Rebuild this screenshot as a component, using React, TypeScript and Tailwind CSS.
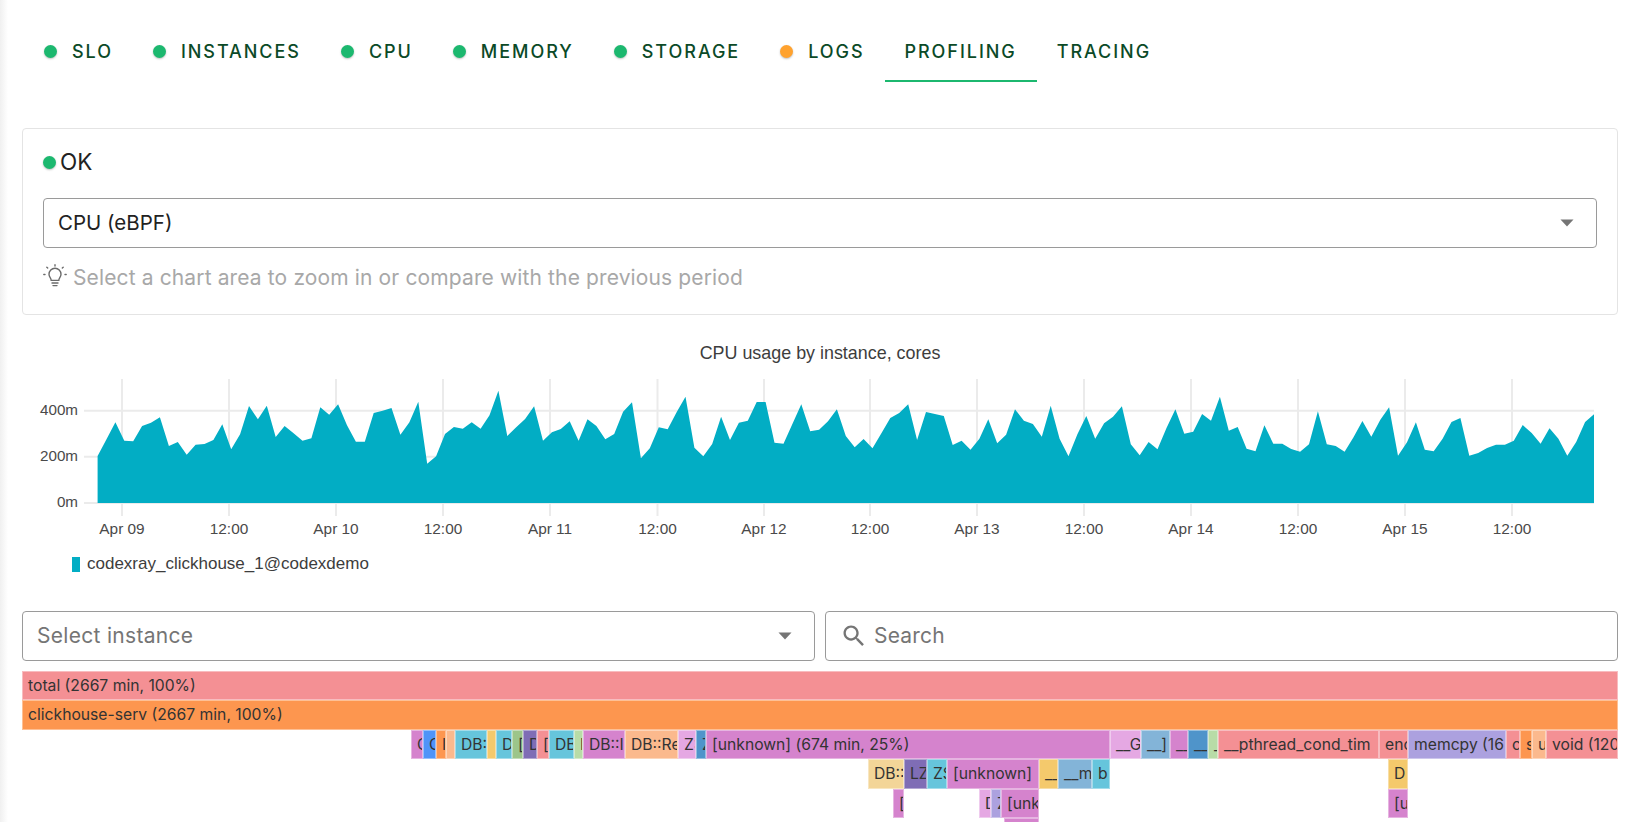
const font = "font-['Inter','Noto_Sans',sans-serif]"

const tabs = [
  { name: "SLO", dot: "bg-[#1cb86f]" },
  { name: "INSTANCES", dot: "bg-[#1cb86f]" },
  { name: "CPU", dot: "bg-[#1cb86f]" },
  { name: "MEMORY", dot: "bg-[#1cb86f]" },
  { name: "STORAGE", dot: "bg-[#1cb86f]" },
  { name: "LOGS", dot: "bg-[#ffa22e]" },
  { name: "PROFILING", active: true },
  { name: "TRACING" },
]

// y of each hourly sample, measured from the top of the plot (340px on the page), x3
const samples = [
  348, 298, 247, 302, 304, 258, 248, 232, 318, 306, 344, 314, 312, 300, 253, 328, 283, 198, 238, 197, 291, 258, 280, 302,
  295, 202, 224, 193, 256, 305, 305, 219, 212, 204, 284, 247, 185, 371, 349, 282, 261, 266, 247, 266, 226, 152, 288, 262,
  237, 199, 302, 277, 267, 244, 302, 238, 258, 298, 282, 215, 187, 355, 325, 262, 268, 217, 170, 323, 349, 312, 230, 300,
  248, 242, 186, 186, 308, 311, 252, 193, 274, 269, 244, 208, 288, 322, 297, 325, 280, 234, 219, 193, 300, 216, 222, 228,
  315, 302, 329, 296, 238, 310, 284, 208, 242, 252, 290, 197, 296, 349, 283, 228, 296, 250, 230, 199, 313, 346, 306, 328,
  264, 208, 281, 275, 222, 242, 170, 272, 261, 326, 334, 256, 311, 311, 327, 335, 313, 214, 313, 318, 335, 292, 243, 290,
  240, 202, 347, 307, 247, 329, 334, 296, 246, 234, 347, 339, 324, 314, 314, 302, 255, 279, 311, 265, 296, 347, 306, 246,
  223,
]

const plotLeft = 97.6
const plotRight = 1594
const step = (plotRight - plotLeft) / (samples.length - 1)
const base = 503
const areaPoints = [
  `${plotLeft},${base}`,
  ...samples.map((v, i) => `${(plotLeft + i * step).toFixed(1)},${(340 + v / 3).toFixed(1)}`),
  `${plotRight},${base}`,
].join(" ")

const xTicks = [
  ["Apr 09", 122], ["12:00", 229], ["Apr 10", 336], ["12:00", 443], ["Apr 11", 550], ["12:00", 657.5],
  ["Apr 12", 764], ["12:00", 870], ["Apr 13", 977], ["12:00", 1084], ["Apr 14", 1191], ["12:00", 1298],
  ["Apr 15", 1405], ["12:00", 1512],
] as const

const yTicks = [["400m", 410.7], ["200m", 456.7], ["0m", 503]] as const

const pink = "bg-[#d583cd]"
const lightPink = "bg-[#e5a8e3]"
const salmon = "bg-[#f49094]"
const orange = "bg-[#fd964f]"
const peach = "bg-[#fbb98d]"
const cyan = "bg-[#66c5dc]"
const blue = "bg-[#4f94f8]"
const steel = "bg-[#4f94ca]"
const bluegray = "bg-[#83b4d8]"
const yellow = "bg-[#f4c96c]"
const tan = "bg-[#f3d598]"
const green = "bg-[#9cc58a]"
const lightGreen = "bg-[#b8dca7]"
const purple = "bg-[#7f6db5]"
const lavender = "bg-[#aca1df]"

type Frame = [number, number, string, string]

const flame: Frame[][] = [
  [[22, 1618, salmon, "total (2667 min, 100%)"]],
  [[22, 1618, orange, "clickhouse-serv (2667 min, 100%)"]],
  [
    [411, 423, pink, "C"], [423, 436, blue, "C"], [436, 446, orange, "I"], [446, 455, peach, ""],
    [455, 487, cyan, "DB:"], [487, 496, yellow, ""], [496, 512, cyan, "D"], [512, 523, green, "["],
    [523, 537, purple, "D"], [537, 549, salmon, "["], [549, 574, cyan, "DB"], [574, 583, lightGreen, "I"],
    [583, 625, pink, "DB::I"], [625, 678, peach, "DB::Re"], [678, 696, lightPink, "Z:"], [696, 706, steel, "Z"],
    [706, 1110, pink, "[unknown] (674 min, 25%)"], [1110, 1141, lightPink, "__G"], [1141, 1170, bluegray, "__]"],
    [1170, 1188, pink, "__"], [1188, 1208, steel, "__"], [1208, 1218, lightGreen, "_"],
    [1218, 1379, salmon, "__pthread_cond_tim"], [1379, 1408, salmon, "enc"], [1408, 1506, lavender, "memcpy (16"],
    [1506, 1520, salmon, "c"], [1520, 1532, orange, "s"], [1532, 1546, peach, "u"], [1546, 1618, salmon, "void (120"],
  ],
  [
    [868, 904, tan, "DB::"], [904, 927, purple, "LZ"], [927, 947, cyan, "ZS"], [947, 1039, pink, "[unknown]"],
    [1039, 1058, yellow, "__"], [1058, 1092, bluegray, "__m"], [1092, 1110, cyan, "b"], [1388, 1408, yellow, "D"],
  ],
  [
    [893, 904, pink, "["], [979, 991, lightPink, "D"], [991, 1001, lavender, "Z"], [1001, 1039, pink, "[unk"],
    [1388, 1408, pink, "[u"],
  ],
  [[1004, 1039, pink, ""]],
]

function Caret() {
  return (
    <svg width="14" height="8" viewBox="0 0 14 8" className="shrink-0">
      <path d="M0.5 0.5h13L7 7.5z" fill="#757575" />
    </svg>
  )
}

function Bulb() {
  return (
    <svg width="24" height="26" viewBox="0 0 24 26" fill="none" stroke="#6b6b6b" strokeWidth="1.4" strokeLinecap="round" className="shrink-0">
      <path d="M8.2 16.4c0-2.4-2.2-3.2-2.2-6.2a6 6 0 0 1 12 0c0 3-2.2 3.8-2.2 6.2z" />
      <path d="M9 19h6M10 21.6h4" />
      <path d="M12 0.8v1.2M3.8 3.2l.9.9M20.2 3.2l-.9.9M0.8 10.5h1.2M22 10.5h1.2" />
    </svg>
  )
}

export default function App() {
  return (
    <div className={`relative h-screen w-full overflow-hidden bg-white ${font}`}>
      <div className="pointer-events-none absolute inset-y-0 left-0 w-[8px] bg-gradient-to-r from-[#f0f0f0] to-white" />
      <div className="relative pl-[22px] pr-[19px]">
        <nav className="flex h-[82px] items-start pl-[2px] pt-[21px]">
          {tabs.map((t) => (
            <div
              key={t.name}
              className={`flex h-[61px] items-center border-y-2 border-t-transparent px-[20px] text-[18px] font-medium tracking-[1.95px] text-[#0b4a27] ${t.active ? "border-b-[#1cb86f]" : "border-b-transparent"}`}
            >
              {t.dot && <span className={`mr-[15px] h-[13px] w-[13px] rounded-full shadow-[0_1px_2px_rgba(0,0,0,0.25)] ${t.dot}`} />}
              {t.name}
            </div>
          ))}
        </nav>

        <section className="mt-[46px] h-[187px] rounded border border-[#e4e4e4] px-[20px] pt-[20px]">
          <div className="flex h-[26px] items-center gap-[4px] text-[22.5px] text-[#222]">
            <span className="h-[13px] w-[13px] rounded-full bg-[#1cb86f] shadow-[0_1px_2px_rgba(0,0,0,0.25)]" />
            OK
          </div>
          <div className="mt-[23px] flex h-[50px] items-center justify-between rounded border border-[#9a9a9a] pl-[14px] pr-[22px] text-[20.5px] text-[#222]">
            CPU (eBPF)
            <Caret />
          </div>
          <div className="mt-[17px] flex h-[26px] items-center gap-[6px] text-[21px] tracking-[0.13px] text-[#a8a8a8]">
            <span className="-mt-[2px] flex"><Bulb /></span>
            Select a chart area to zoom in or compare with the previous period
          </div>
        </section>

        <div className="mt-[26px] text-center font-['Liberation_Sans',sans-serif] text-[17.9px] leading-[24px] text-[#3d3d3d]">
          CPU usage by instance, cores
        </div>

        <svg width="1596" height="179" viewBox="22 365 1596 179" className="block font-['Liberation_Sans',sans-serif]">
          {xTicks.map(([label, x], i) => (
            <g key={i}>
              <line x1={x} x2={x} y1={379} y2={516} stroke="#ebebeb" strokeWidth="2" />
              <text x={x} y={534} textAnchor="middle" fontSize="15.4" fill="#4a4a4a">{label}</text>
            </g>
          ))}
          {yTicks.map(([label, y]) => (
            <g key={label}>
              <line x1={84} x2={plotRight} y1={y} y2={y} stroke="#ebebeb" strokeWidth="2" />
              <text x={78} y={y + 4} textAnchor="end" fontSize="15.2" fill="#4a4a4a">{label}</text>
            </g>
          ))}
          <polygon points={areaPoints} fill="#02adc4" />
        </svg>

        <div className="mt-[12px] flex h-[16px] items-center pl-[50px] font-['Liberation_Sans',sans-serif] text-[17px] text-[#3d3d3d]">
          <span className="mr-[7px] h-[15px] w-[8px] bg-[#02adc4]" />
          codexray_clickhouse_1@codexdemo
        </div>

        <div className="mt-[39px] grid grid-cols-2 gap-[10px]">
          <div className="flex h-[50px] items-center justify-between rounded border border-[#9a9a9a] pb-[1px] pl-[14px] pr-[22px] text-[21px] tracking-[0.3px] text-[#757575]">
            Select instance
            <Caret />
          </div>
          <div className="flex h-[50px] items-center gap-[6px] rounded border border-[#9a9a9a] pb-[1px] pl-[14px] text-[21px] tracking-[0.2px] text-[#757575]">
            <svg width="28" height="28" viewBox="0 0 24 24" fill="#757575" className="shrink-0">
              <path d="M15.5 14h-.79l-.28-.27C15.41 12.59 16 11.11 16 9.5 16 5.91 13.09 3 9.5 3S3 5.91 3 9.5 5.91 16 9.5 16c1.61 0 3.09-.59 4.23-1.57l.27.28v.79l5 4.99L20.49 19l-4.99-5zm-6 0C7.01 14 5 11.99 5 9.5S7.01 5 9.5 5 14 7.01 14 9.5 11.99 14 9.5 14z" />
            </svg>
            Search
          </div>
        </div>

        <div className="mt-[10px]">
          {flame.map((row, r) => (
            <div key={r} className="flex h-[29.4px]">
              {row.map(([from, to, color, label], i) => {
                const prev = i === 0 ? 22 : row[i - 1][1]
                return (
                  <div
                    key={i}
                    className={`h-full shrink-0 overflow-hidden whitespace-nowrap border border-white/40 pl-[5px] text-[15.7px] leading-[27px] text-[#333] ${color}`}
                    style={{ marginLeft: from - prev, width: to - from }}
                  >
                    {label}
                  </div>
                )
              })}
            </div>
          ))}
        </div>
      </div>
    </div>
  )
}
